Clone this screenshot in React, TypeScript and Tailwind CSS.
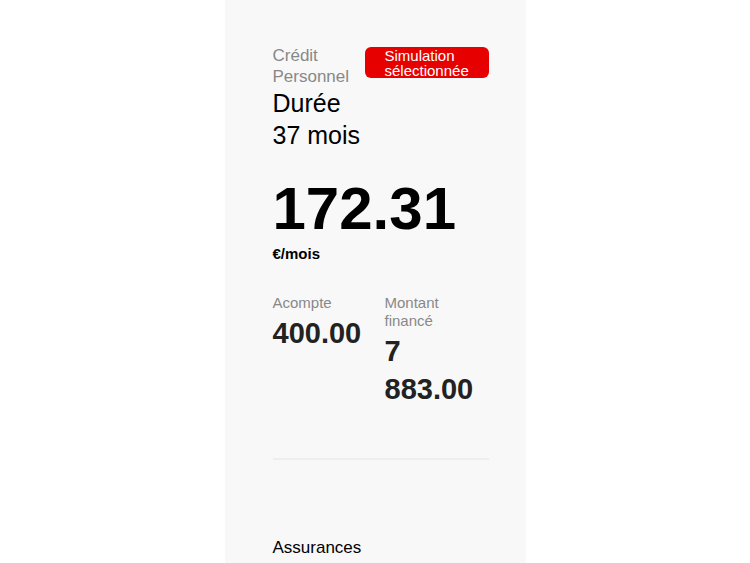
export default function App() {
  return (
    <div className="min-h-[563px] bg-white font-['Liberation_Sans',Arial,sans-serif]">
      <div className="mx-auto min-h-[563px] w-[301px] bg-[#f8f8f8] pl-12 pr-[37px] pt-[45px]">
        {/* header */}
        <div className="flex items-start justify-between">
          <div className="text-[17px] leading-[21px] text-[#888888]">Crédit Personnel</div>
          <div className="mt-[2px] flex h-[31px] w-[124px] shrink-0 flex-col justify-center rounded-[6px] bg-[#e60000] px-5 text-[15px] leading-[15px] text-white">
            Simulation sélectionnée
          </div>
        </div>

        <div className="text-[25px] leading-[32px] text-black">
          <div>Durée</div>
          <div>37 mois</div>
        </div>

        <div className="mt-[26px] text-[60px] font-bold leading-[64px] text-black">172.31</div>
        <div className="mt-[3px] text-[15px] font-bold leading-[20px] text-black">€/mois</div>

        <div className="mt-[30px] grid grid-cols-2 gap-2">
          <div>
            <div className="text-[15px] leading-[18px] text-[#888888]">Acompte</div>
            <div className="mt-[2px] text-[29px] font-bold leading-[38px] text-[#222222]">400.00</div>
          </div>
          <div>
            <div className="text-[15px] leading-[18px] text-[#888888]">Montant financé</div>
            <div className="mt-[2px] text-[29px] font-bold leading-[38px] text-[#222222]">7 883.00</div>
          </div>
        </div>

        <div className="mt-[50px] h-[2px] bg-[#eeeeee]" />

        <div className="mt-[77px] text-[17px] leading-[21px] text-black">Assurances</div>
      </div>
    </div>
  )
}
